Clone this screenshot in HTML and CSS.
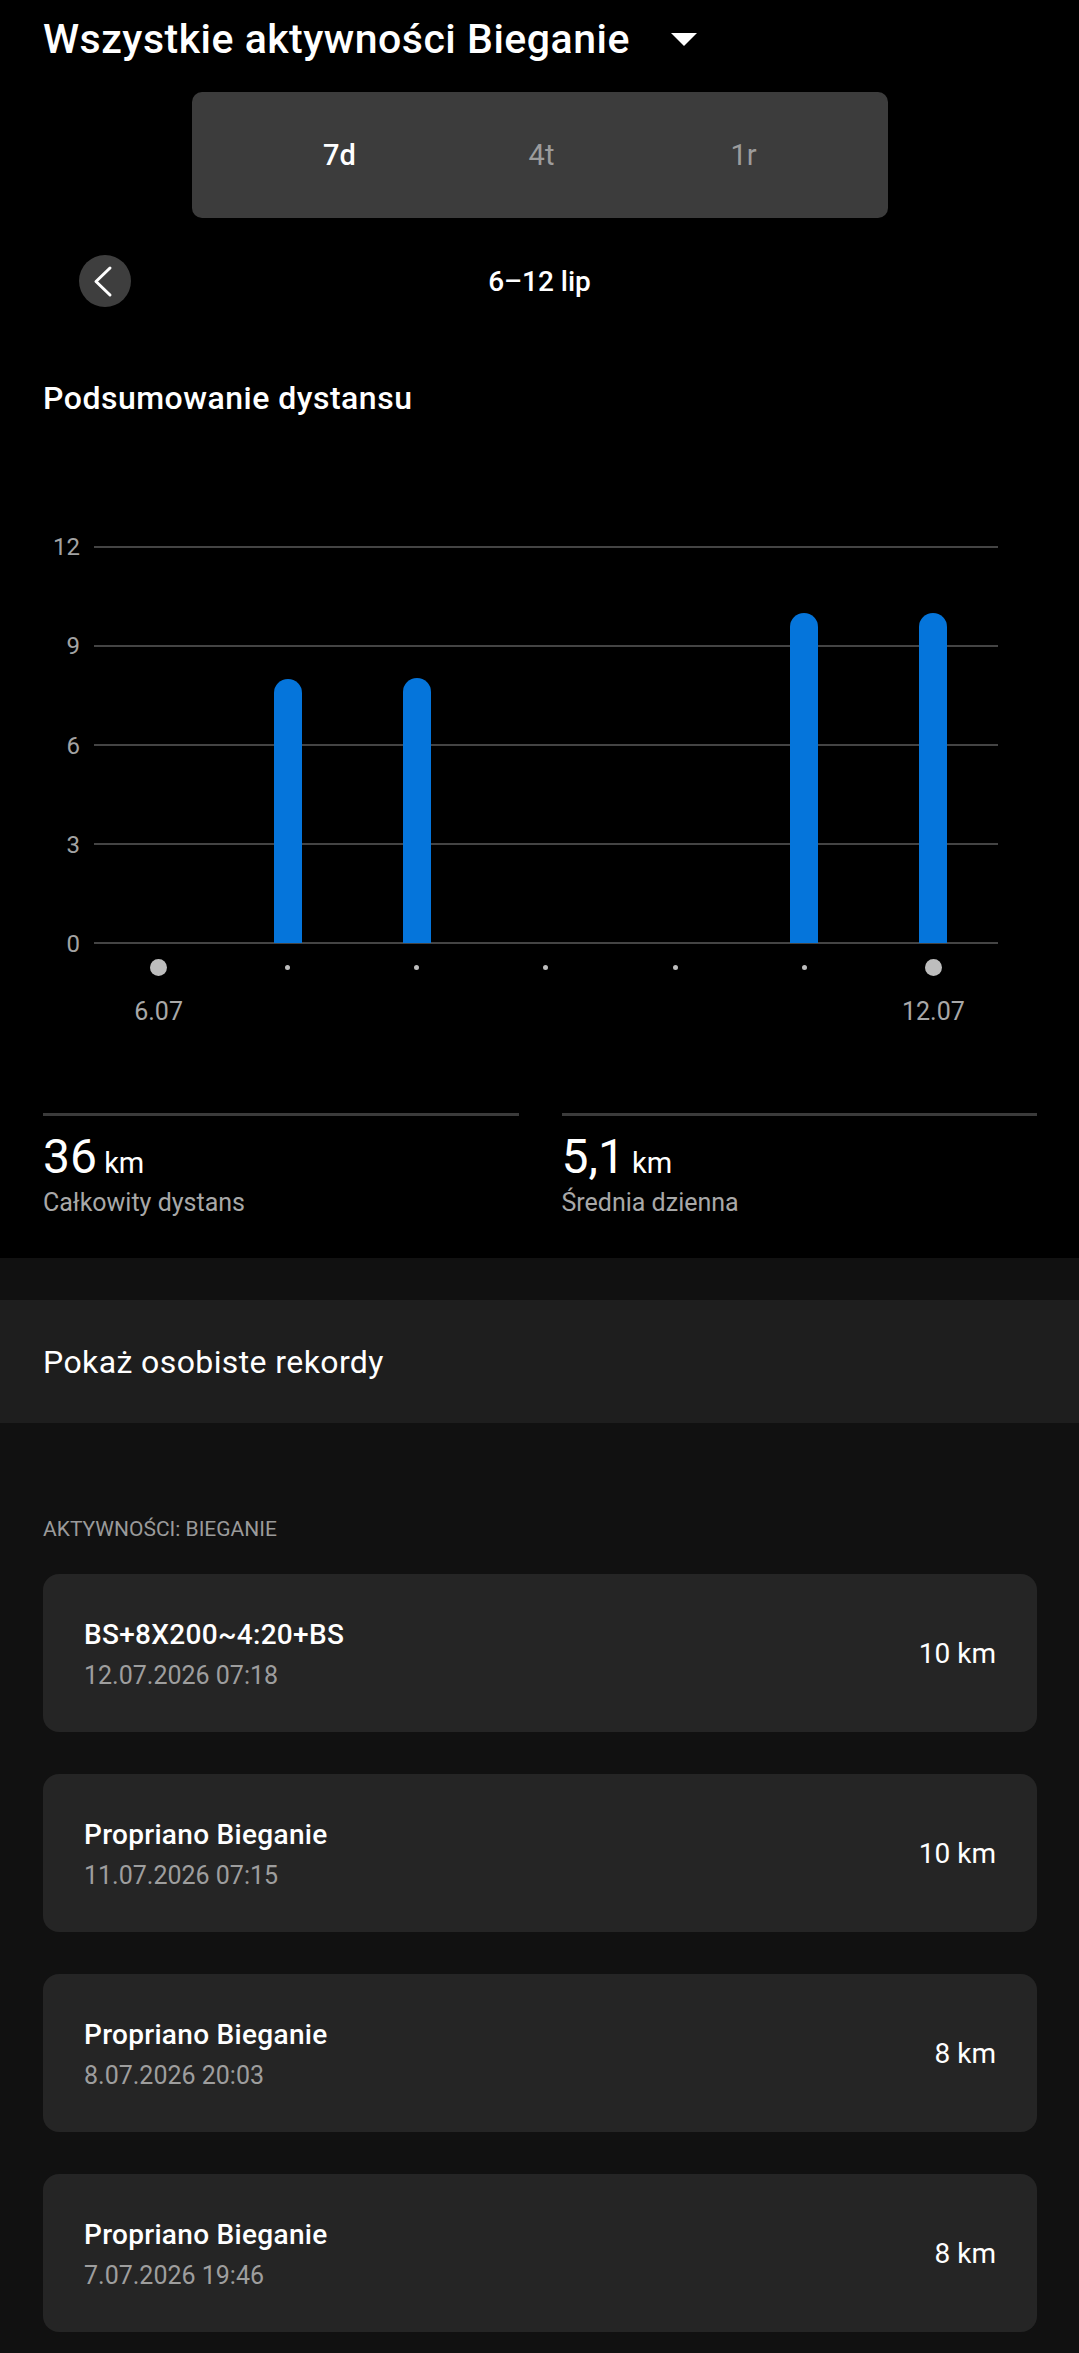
FILE: index.html
```html
<!DOCTYPE html>
<html lang="pl">
<head>
<meta charset="utf-8">
<title>Bieganie – podsumowanie</title>
<link rel="stylesheet" href="styles.css">
</head>
<body>
<div class="summary">
  <header class="head">
    <h1 class="head-title">Wszystkie aktywności Bieganie</h1>
    <svg class="head-caret" width="26" height="13" viewBox="0 0 26 13" aria-hidden="true">
      <polygon points="0,0 26,0 13,13" fill="#fff"/>
    </svg>
  </header>

  <nav class="range">
    <span class="range-item is-active">7d</span>
    <span class="range-item">4t</span>
    <span class="range-item">1r</span>
  </nav>

  <div class="period">
    <button class="period-back" type="button" aria-label="Poprzedni okres">
      <svg width="52" height="52" viewBox="0 0 52 52" aria-hidden="true">
        <polyline points="31,13 17,26.5 31,40" fill="none" stroke="#fff" stroke-width="3" stroke-linecap="round" stroke-linejoin="round"/>
      </svg>
    </button>
    <span class="period-label">6–12 lip</span>
    <span></span>
  </div>

  <h2 class="section-title">Podsumowanie dystansu</h2>

  <div class="chart">
    <div class="chart-axis">
      <span>12</span><span>9</span><span>6</span><span>3</span><span>0</span>
    </div>
    <div class="chart-plot">
      <div class="chart-col"></div>
      <div class="chart-col"><div class="chart-bar" style="height:264px"></div></div>
      <div class="chart-col"><div class="chart-bar" style="height:265px"></div></div>
      <div class="chart-col"></div>
      <div class="chart-col"></div>
      <div class="chart-col"><div class="chart-bar" style="height:330px"></div></div>
      <div class="chart-col"><div class="chart-bar" style="height:330px"></div></div>
    </div>
    <div class="chart-ticks">
      <span class="tick tick-major"></span>
      <span class="tick"></span>
      <span class="tick"></span>
      <span class="tick"></span>
      <span class="tick"></span>
      <span class="tick"></span>
      <span class="tick tick-major"></span>
    </div>
    <div class="chart-dates">
      <span>6.07</span><span></span><span></span><span></span><span></span><span></span><span>12.07</span>
    </div>
  </div>

  <div class="stats">
    <div class="stat">
      <div class="stat-value">36<span class="stat-unit"> km</span></div>
      <div class="stat-label">Całkowity dystans</div>
    </div>
    <div class="stat">
      <div class="stat-value">5,1<span class="stat-unit"> km</span></div>
      <div class="stat-label">Średnia dzienna</div>
    </div>
  </div>
</div>

<div class="records">Pokaż osobiste rekordy</div>

<section class="activities">
  <h3 class="activities-label">AKTYWNOŚCI: BIEGANIE</h3>
  <ul class="activity-list">
    <li class="activity">
      <div class="activity-info">
        <div class="activity-name">BS+8X200~4:20+BS</div>
        <div class="activity-date">12.07.2026 07:18</div>
      </div>
      <div class="activity-distance">10 km</div>
    </li>
    <li class="activity">
      <div class="activity-info">
        <div class="activity-name">Propriano Bieganie</div>
        <div class="activity-date">11.07.2026 07:15</div>
      </div>
      <div class="activity-distance">10 km</div>
    </li>
    <li class="activity">
      <div class="activity-info">
        <div class="activity-name">Propriano Bieganie</div>
        <div class="activity-date">8.07.2026 20:03</div>
      </div>
      <div class="activity-distance">8 km</div>
    </li>
    <li class="activity">
      <div class="activity-info">
        <div class="activity-name">Propriano Bieganie</div>
        <div class="activity-date">7.07.2026 19:46</div>
      </div>
      <div class="activity-distance">8 km</div>
    </li>
  </ul>
</section>
</body>
</html>
```

FILE: styles.css
```css
* {
  box-sizing: border-box;
}

body {
  margin: 0;
  background: #111111;
  color: #ffffff;
  font-family: Roboto, "Noto Sans", "Liberation Sans", sans-serif;
}

/* ---------- top summary (black) ---------- */
.summary {
  background: #000000;
  padding-bottom: 41px;
}

.head {
  display: flex;
  align-items: center;
  padding: 16px 43px 0;
}

.head-title {
  margin: 0;
  font-size: 41px;
  line-height: 47px;
  font-weight: 500;
  letter-spacing: 0.5px;
}

.head-caret {
  margin-left: 41px;
  display: block;
}

.range {
  display: grid;
  grid-template-columns: repeat(3, 1fr);
  width: 696px;
  height: 126px;
  margin: 29px auto 0;
  padding: 0 43px 0 47px;
  background: #3c3c3c;
  border-radius: 10px;
}

.range-item {
  display: flex;
  align-items: center;
  justify-content: center;
  font-size: 29px;
  color: #9c9c9c;
}

.range-item.is-active {
  color: #ffffff;
  font-weight: 500;
}

.period {
  display: grid;
  grid-template-columns: 1fr auto 1fr;
  align-items: center;
  margin-top: 37px;
  padding: 0 79px;
}

.period-back {
  width: 52px;
  height: 52px;
  padding: 0;
  border: 0;
  border-radius: 50%;
  background: #3e3e3e;
}

.period-back svg {
  display: block;
}

.period-label {
  font-size: 28px;
  font-weight: 500;
}

.section-title {
  margin: 73px 0 0;
  padding-left: 43px;
  font-size: 32px;
  line-height: 36px;
  font-weight: 500;
  letter-spacing: 0.5px;
}

/* ---------- distance chart ---------- */
.chart {
  display: grid;
  grid-template-columns: 80px 904px;
  column-gap: 14px;
  margin-top: 130px;
}

.chart-axis {
  grid-row: 1;
  grid-column: 1;
  display: flex;
  flex-direction: column;
  justify-content: space-between;
  align-items: flex-end;
  margin: -12px 0 -13px;
  font-size: 24px;
  line-height: 26px;
  color: #a3a3a3;
}

.chart-plot {
  grid-row: 1;
  grid-column: 2;
  display: grid;
  grid-template-columns: repeat(7, 1fr);
  align-items: end;
  height: 398px;
  padding-bottom: 1px;
  background: repeating-linear-gradient(to bottom, #444444 0 2px, transparent 2px 99px);
}

.chart-col {
  display: flex;
  justify-content: center;
  align-items: flex-end;
  height: 100%;
}

.chart-bar {
  width: 28px;
  border-radius: 14px 14px 0 0;
  background: #0575db;
}

.chart-ticks {
  grid-column: 2;
  display: grid;
  grid-template-columns: repeat(7, 1fr);
  justify-items: center;
  align-items: center;
  height: 46px;
}

.tick {
  width: 5px;
  height: 5px;
  border-radius: 50%;
  background: #bdbdbd;
}

.tick-major {
  width: 17px;
  height: 17px;
}

.chart-dates {
  grid-column: 2;
  display: grid;
  grid-template-columns: repeat(7, 1fr);
  text-align: center;
  font-size: 25px;
  line-height: 44px;
  color: #a8a8a8;
}

/* ---------- totals ---------- */
.stats {
  display: grid;
  grid-template-columns: 1fr 1fr;
  column-gap: 43px;
  margin-top: 79px;
  padding: 0 42px 0 43px;
}

.stat {
  border-top: 3px solid #3b3b3b;
  padding-top: 16px;
}

.stat-value {
  font-size: 48px;
  line-height: 49px;
}

.stat-unit {
  font-size: 29px;
}

.stat-label {
  font-size: 25px;
  line-height: 29px;
  color: #a8a8a8;
}

/* ---------- personal records ---------- */
.records {
  display: flex;
  align-items: center;
  height: 123px;
  margin-top: 42px;
  padding-left: 43px;
  background: #1e1e1e;
  font-size: 32px;
  letter-spacing: 0.4px;
}

/* ---------- activity list ---------- */
.activities {
  padding: 95px 42px 21px 43px;
}

.activities-label {
  margin: 0;
  font-size: 21px;
  line-height: 23px;
  font-weight: 400;
  color: #9a9a9a;
}

.activity-list {
  list-style: none;
  margin: 33px 0 0;
  padding: 0;
  display: flex;
  flex-direction: column;
  gap: 42px;
}

.activity {
  display: flex;
  align-items: center;
  justify-content: space-between;
  height: 158px;
  padding: 4px 41px 0;
  border-radius: 16px;
  background: #252525;
}

.activity-name {
  font-size: 28px;
  line-height: 30px;
  font-weight: 500;
  letter-spacing: 0.3px;
}

.activity-date {
  margin-top: 11px;
  font-size: 25px;
  line-height: 29px;
  color: #9e9e9e;
}

.activity-distance {
  font-size: 28px;
  margin-top: -4px;
}
```
